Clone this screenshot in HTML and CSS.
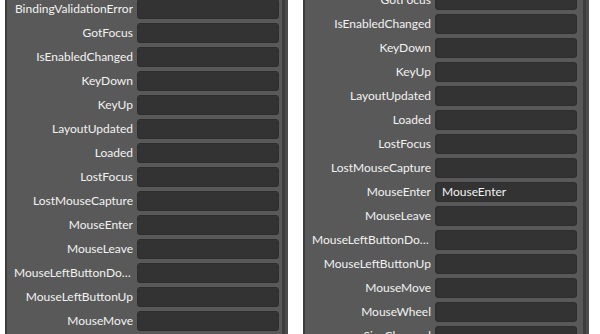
FILE: index.html
```html
<!DOCTYPE html>
<html lang="en">

<head>
    <meta charset="UTF-8">
    <meta name="viewport" content="width=device-width, initial-scale=1.0">
    <title>Events</title>
    <link rel="stylesheet" href="styles.css">
</head>

<body>
    <div class="panels">
        <div class="panel">
            <div class="rows rows-left">
                <div class="row"><span class="label">BindingValidationError</span><span class="box"></span></div>
                <div class="row"><span class="label">GotFocus</span><span class="box"></span></div>
                <div class="row"><span class="label">IsEnabledChanged</span><span class="box"></span></div>
                <div class="row"><span class="label">KeyDown</span><span class="box"></span></div>
                <div class="row"><span class="label">KeyUp</span><span class="box"></span></div>
                <div class="row"><span class="label">LayoutUpdated</span><span class="box"></span></div>
                <div class="row"><span class="label">Loaded</span><span class="box"></span></div>
                <div class="row"><span class="label">LostFocus</span><span class="box"></span></div>
                <div class="row"><span class="label">LostMouseCapture</span><span class="box"></span></div>
                <div class="row"><span class="label">MouseEnter</span><span class="box"></span></div>
                <div class="row"><span class="label">MouseLeave</span><span class="box"></span></div>
                <div class="row"><span class="label">MouseLeftButtonDown</span><span class="box"></span></div>
                <div class="row"><span class="label">MouseLeftButtonUp</span><span class="box"></span></div>
                <div class="row"><span class="label">MouseMove</span><span class="box"></span></div>
            </div>
        </div>
        <div class="panel">
            <div class="rows rows-right">
                <div class="row"><span class="label">GotFocus</span><span class="box"></span></div>
                <div class="row"><span class="label">IsEnabledChanged</span><span class="box"></span></div>
                <div class="row"><span class="label">KeyDown</span><span class="box"></span></div>
                <div class="row"><span class="label">KeyUp</span><span class="box"></span></div>
                <div class="row"><span class="label">LayoutUpdated</span><span class="box"></span></div>
                <div class="row"><span class="label">Loaded</span><span class="box"></span></div>
                <div class="row"><span class="label">LostFocus</span><span class="box"></span></div>
                <div class="row"><span class="label">LostMouseCapture</span><span class="box"></span></div>
                <div class="row"><span class="label">MouseEnter</span><span class="box">MouseEnter</span></div>
                <div class="row"><span class="label">MouseLeave</span><span class="box"></span></div>
                <div class="row"><span class="label">MouseLeftButtonDown</span><span class="box"></span></div>
                <div class="row"><span class="label">MouseLeftButtonUp</span><span class="box"></span></div>
                <div class="row"><span class="label">MouseMove</span><span class="box"></span></div>
                <div class="row"><span class="label">MouseWheel</span><span class="box"></span></div>
                <div class="row"><span class="label">SizeChanged</span><span class="box"></span></div>
            </div>
        </div>
    </div>
</body>

</html>
```

FILE: styles.css
```css
body {
    font-family: Lato, "Noto Sans", sans-serif;
    margin: 0;
    background-color: #ffffff;
}

.panels {
    display: flex;
    gap: 15px;
    height: 334px;
    padding-left: 5px;
}

.panel {
    height: 100%;
    overflow: hidden;
    background-color: #595959;
    border-left: 2px solid #3d3d3d;
    border-right: 3px solid #4b4b4b;
    box-shadow: inset -3px 0 0 #3d3d3d;
    box-sizing: border-box;
}

.panel:first-child {
    width: 283px;
}

.panel:last-child {
    width: 286px;
}

.rows {
    display: flex;
    flex-direction: column;
    gap: 4px;
}

.rows-left {
    margin-top: -1px;
}

.rows-right {
    margin-top: -10px;
}

.row {
    display: flex;
    align-items: center;
    gap: 4px;
    height: 20px;
}

.label {
    width: 119px;
    padding-left: 7px;
    flex-shrink: 0;
    text-align: right;
    color: #f2f2f2;
    font-size: 12px;
    line-height: 18px;
    white-space: nowrap;
    overflow: hidden;
    text-overflow: ellipsis;
}

.box {
    width: 142px;
    height: 20px;
    box-sizing: border-box;
    background-color: #333333;
    border: 1px solid #2e2e2e;
    border-radius: 3px;
    color: #f2f2f2;
    font-size: 12px;
    line-height: 18px;
    padding-left: 6px;
}
```
